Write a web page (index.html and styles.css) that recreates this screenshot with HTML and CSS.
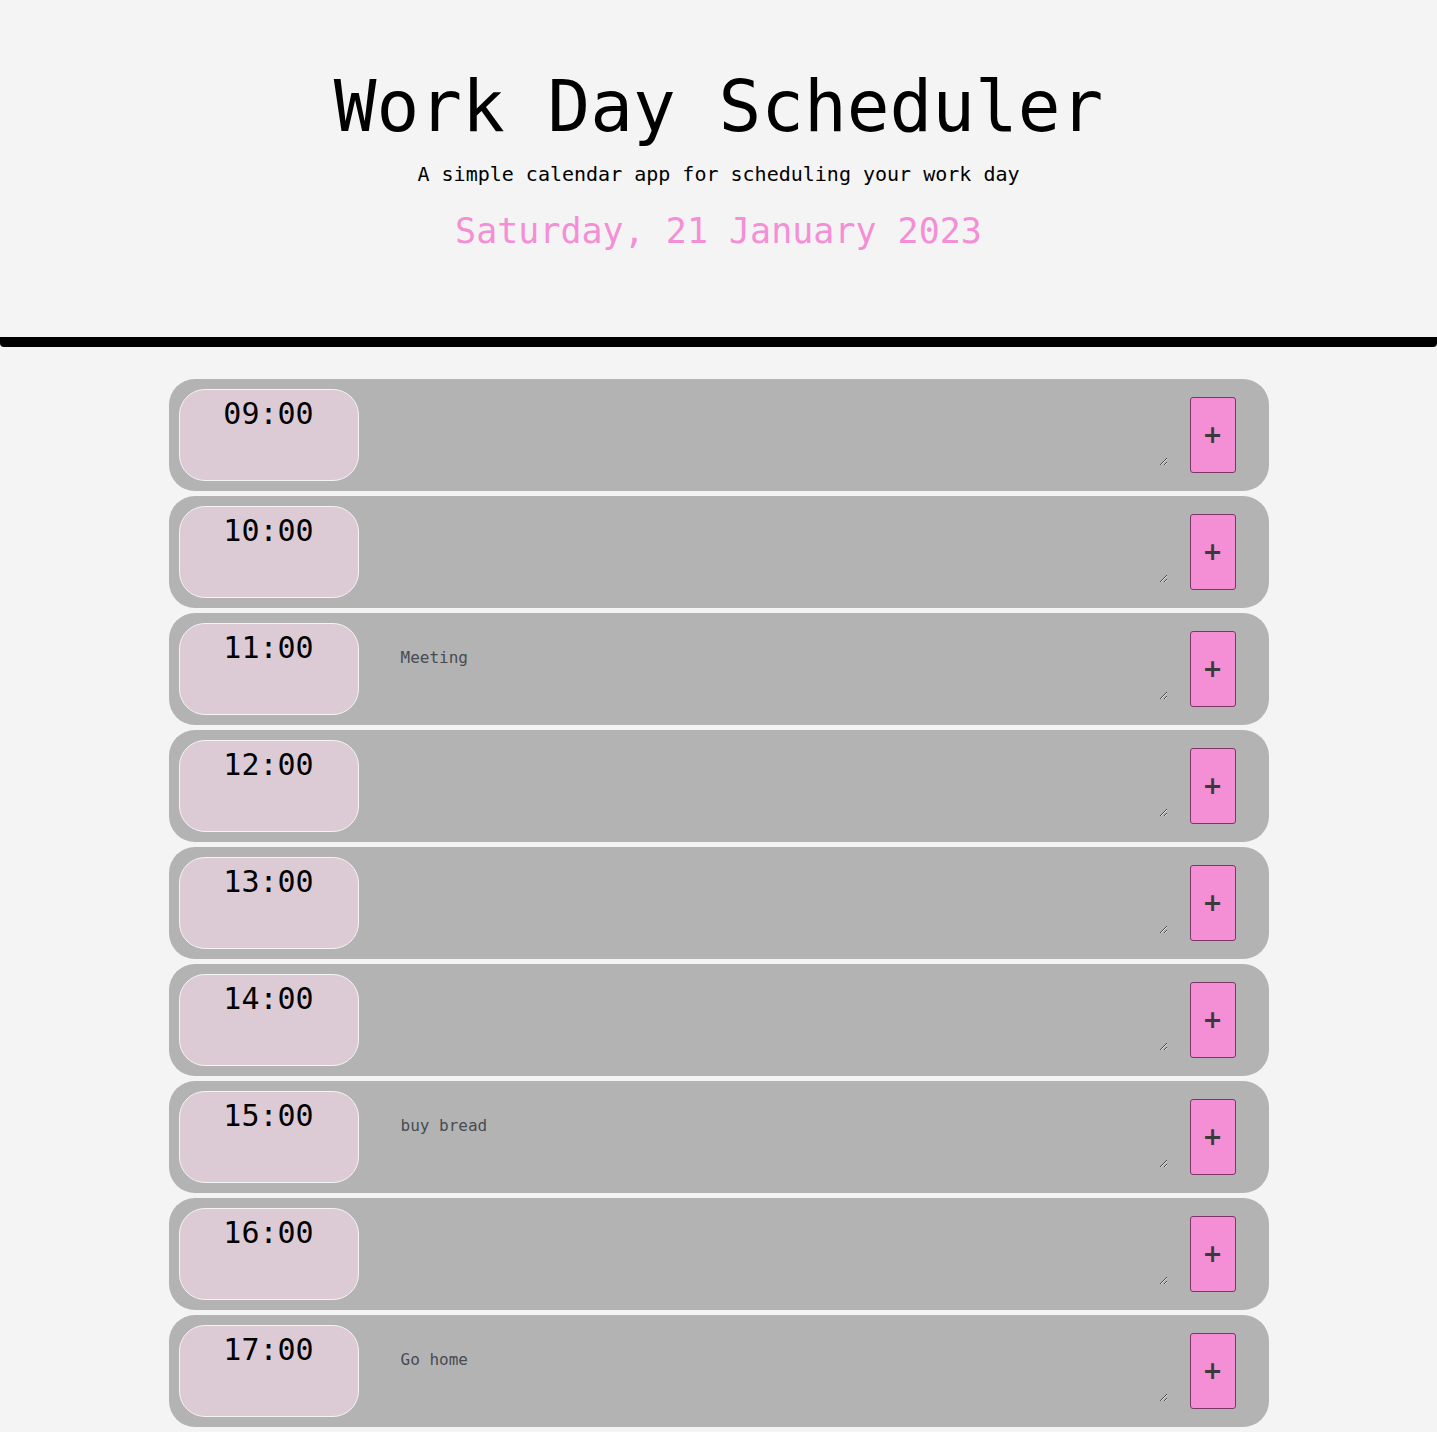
FILE: index.html
```html
<!DOCTYPE html>
<html lang="en">
<head>
<meta charset="utf-8">
<title>Work Day Scheduler</title>
<link rel="stylesheet" href="styles.css">
</head>
<body>
<header class="jumbotron">
  <h1 class="title">Work Day Scheduler</h1>
  <p class="lead">A simple calendar app for scheduling your work day</p>
  <p class="current-day">Saturday, 21 January 2023</p>
</header>
<main class="container">
  <div class="row"><div class="hour">09:00</div><textarea class="description"></textarea><button class="save-btn">+</button></div>
  <div class="row"><div class="hour">10:00</div><textarea class="description"></textarea><button class="save-btn">+</button></div>
  <div class="row"><div class="hour">11:00</div><textarea class="description">Meeting</textarea><button class="save-btn">+</button></div>
  <div class="row"><div class="hour">12:00</div><textarea class="description"></textarea><button class="save-btn">+</button></div>
  <div class="row"><div class="hour">13:00</div><textarea class="description"></textarea><button class="save-btn">+</button></div>
  <div class="row"><div class="hour">14:00</div><textarea class="description"></textarea><button class="save-btn">+</button></div>
  <div class="row"><div class="hour">15:00</div><textarea class="description">buy bread</textarea><button class="save-btn">+</button></div>
  <div class="row"><div class="hour">16:00</div><textarea class="description"></textarea><button class="save-btn">+</button></div>
  <div class="row"><div class="hour">17:00</div><textarea class="description">Go home</textarea><button class="save-btn">+</button></div>
</main>
</body>
</html>
```
FILE: styles.css
```css
html, body {
  margin: 0;
  padding: 0;
  background: #f4f4f4;
  font-family: "DejaVu Sans Mono", "Liberation Mono", monospace;
  color: #000;
}

.jumbotron {
  padding: 67px 0 86px;
  text-align: center;
  border-bottom: 10px solid #000;
  border-radius: 0 0 4px 4px;
}

.title {
  margin: 0;
  font-size: 71px;
  line-height: 80px;
  font-weight: 400;
}

.lead {
  margin: 15px 0 0;
  font-size: 20px;
  line-height: 24px;
}

.current-day {
  margin: 25px 0 0;
  font-size: 35px;
  line-height: 40px;
  color: #f48fd6;
}

.container {
  width: 1100px;
  margin: 32px auto 0;
  display: flex;
  flex-direction: column;
  gap: 5px;
  padding-bottom: 5px;
}

.row {
  display: flex;
  align-items: center;
  height: 112px;
  box-sizing: border-box;
  padding: 10px 33px 10px 10px;
  background: #b3b3b3;
  border-radius: 26px;
}

.hour {
  align-self: stretch;
  width: 180px;
  box-sizing: border-box;
  border: 1px solid #f4f4f4;
  border-radius: 26px;
  background: #dccbd4;
  text-align: center;
  font-size: 30px;
  line-height: 47px;
}

.description {
  flex: 1;
  align-self: flex-start;
  height: 70px;
  margin: 7px 22px 0 10px;
  box-sizing: border-box;
  padding: 18px 32px 16px;
  background: transparent;
  border: none;
  outline: none;
  font-family: "DejaVu Sans Mono", "Liberation Mono", monospace;
  font-size: 16px;
  line-height: 20px;
  color: #474c52;
}

.save-btn {
  width: 46px;
  height: 76px;
  padding: 0;
  background: #f48fd6;
  border: 1px solid #7b3566;
  border-radius: 3px;
  font-family: "DejaVu Sans", sans-serif;
  font-size: 24px;
  font-weight: 700;
  color: #3a3a3a;
  line-height: 1;
}
```
